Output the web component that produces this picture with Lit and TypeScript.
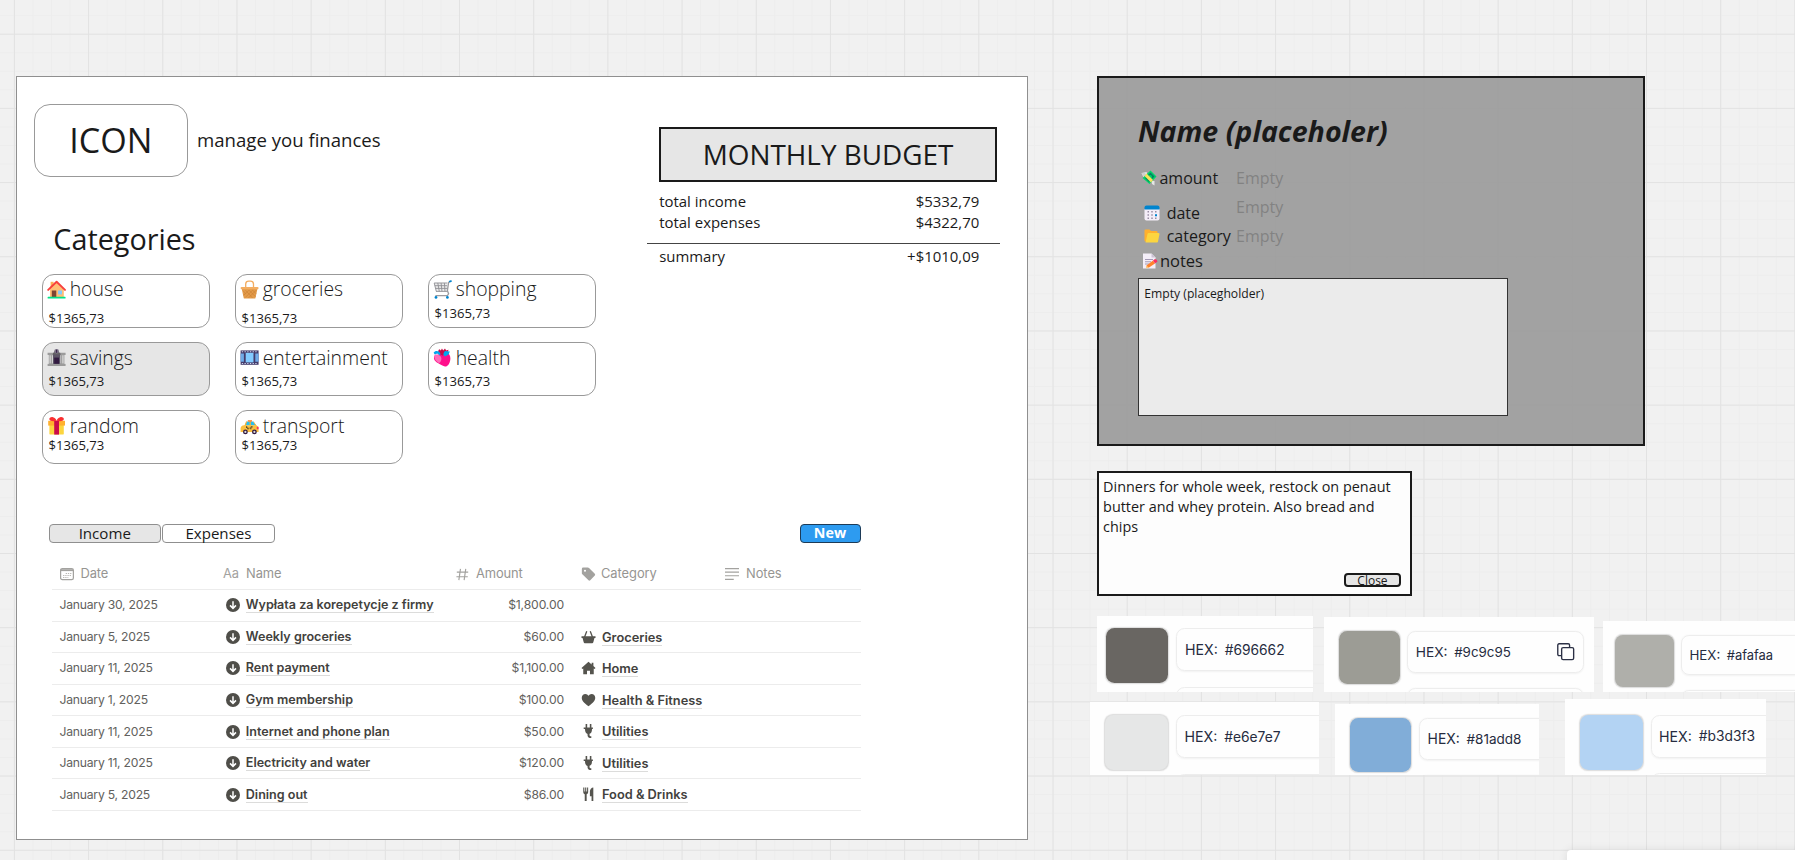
import { LitElement, html, css, svg, nothing } from "lit";
import { customElement } from "lit/decorators.js";
import { classMap } from "lit/directives/class-map.js";
import { styleMap } from "lit/directives/style-map.js";

const emoji: Record<string, unknown> = {
  house: svg`<path d="M5 13h22v16H5z" fill="#ffbf75"/><path d="M6 3h5v9H6z" fill="#ffb055"/><path d="M16 4 28 16v13H5V15z" fill="#ffbf75"/><path d="M2 16.5 16 3l14 13.500" fill="none" stroke="#f8403c" stroke-width="3.200" stroke-linecap="round" stroke-linejoin="round"/><path d="M8 17.500h7.500V29H8z" fill="#7d4533"/><path d="M18.500 17.500h6.500v6.500h-6.500z" fill="#83cbff"/><rect x="1" y="28" width="30" height="3" rx="1" fill="#00e38a"/>`,
  groceries: svg`<path d="M9.500 15V6.500A5 5 0 0 1 14.500 2h3a5 5 0 0 1 5 4.500V15" fill="none" stroke="#f3ad61" stroke-width="2.200"/><path d="M2.500 13h27L26 29a2 2 0 0 1-2 2H8a2 2 0 0 1-2-2z" fill="#e39b49"/><path d="M5 18l4 4-3 3M9 17l12 13M15 17l11 11M21 17l6 6M27 17 14 30M21 17 9 29M15 17l-9 9" fill="none" stroke="#c97f33" stroke-width="1"/><rect x="1" y="11.500" width="30" height="4" rx="2" fill="#f3ad61"/>`,
  shopping: svg`<path d="M2 5h21l2 13-19 1z" fill="#ececec"/><path d="M2 5h22M3 9.500h20.500M4 14h20M5 19h20M2 5l3.500 14M8 5l2.500 14M13.500 5l1.500 14M19 5l1 14" stroke="#8f8f94" stroke-width="1.500" fill="none"/><path d="M29 2 26 4l-2 14 2 5-2 3H4" fill="none" stroke="#9b9b9f" stroke-width="2.200"/><path d="M27 3l4-1.500" stroke="#0084ce" stroke-width="2.800"/><circle cx="5" cy="29" r="2.300" fill="#0084ce"/><circle cx="24" cy="29" r="2.300" fill="#0084ce"/>`,
  savings: svg`<path d="M1 8h30v3.500H1zM3 11h26v16H3z" fill="#9b9b9b"/><path d="M4 12h3v14H4zM25 12h3v14h-3z" fill="#c8c8c8"/><path d="M8.500 12H10v14H8.500zM22 12h1.500v14H22z" fill="#d8d8d8"/><path d="M10 8h12v20H10z" fill="#5c5567"/><path d="M12 16h8v12h-8z" fill="#321b41"/><path d="M9 11 16 2l7 9z" fill="#636363"/><circle cx="16" cy="5.500" r="4" fill="#7b7287"/><path d="M16 3v5" stroke="#321b41" stroke-width="1.600"/><path d="M1 26.500h30V30H1z" fill="#9b9b9b"/>`,
  entertainment: svg`<path d="M1 4h30v24H1z" fill="#433b6b"/><path d="M9.500 8h13v16h-13z" fill="#83cbff"/><path d="M1 9h5.500v14H1zM25.500 9H31v14h-5.500z" fill="#6fa9e6"/><path d="M3 6.200h26M3 25.800h26" stroke="#cfd5ee" stroke-width="1.800" stroke-dasharray="2.200 2.300"/>`,
  health: svg`<path d="M9 10C8 5 9 3 11 2l2 2 2-3 2 3 3-3 2 3 4-1-2 5 3 3-4 4z" fill="#ca0b4a"/><path d="M3 12c-3 6-1 9 5 13 5 3 9 5 12 6 6 0 9-8 9-14s-4-9-9-8l-5 1z" fill="#ff0f8b"/><path d="M3 11c5-1 10 1 11 6 0 5-2 7-4 8C4 22 1 17 3 11z" fill="#ff6eb9"/><path d="M1 8c2-3 5-4 9-2l3 4-2 2-4-3-4 2z" fill="#00a6ed"/><path d="m16 10 4-5 8 1-2 5-6 3z" fill="#00a6ed"/><path d="m12 11 3-7 3 1-1 8z" fill="#ca0b4a"/>`,
  random: svg`<path d="M4 14h24v15a2 2 0 0 1-2 2H6a2 2 0 0 1-2-2z" fill="#fcd53f"/><path d="M2 8h28v8H2z" fill="#ffb02e"/><path d="M12 8h8v23h-8z" fill="#ca0b4a"/><path d="M16 8C11 9 5 9 4 6s3-5 6-4 5 3 6 6zM16 8c5 1 11 1 12-2s-3-5-6-4-5 3-6 6z" fill="#f92f30"/>`,
  transport: svg`<path d="m8 16 3-7h11l5 7z" fill="#28bdf0"/><path d="M7 17 10 9h1.800L9.500 17zM16 9h2v8h-2zM22 9h1l5 8h-2z" fill="#ffb02e"/><path d="M13 7h7v2.500h-7z" fill="#ff822d"/><path d="M1 21q0-5 6-5.500h20q4 1 4 6v5H1z" fill="#fcc03f"/><path d="M10 17h2v2h2v2h2v-2h2v-2h3v2h-2v3h-2v-2h-2v2h-3v-2h-2z" fill="#5b4a2a"/><path d="M28 18h3v4h-3z" fill="#f92f60"/><circle cx="9" cy="26.500" r="4" fill="#321b41"/><circle cx="24" cy="26.500" r="4" fill="#321b41"/><circle cx="9" cy="26.500" r="1.800" fill="#ddd"/><circle cx="24" cy="26.500" r="1.800" fill="#ddd"/>`,
  amount: svg`<path d="M1 6 11 4l4 8-9 5zM21 22h6v9l-5-3z" fill="#e6e6e6"/><path d="M1 6 8 6l3 5-5 4z" fill="#cfcfcf"/><path d="M19 1 31 13 17 28 3 16z" fill="#00d26a"/><path d="m19 5 8 8-11 11-8-8z" fill="#008463"/><circle cx="18" cy="14" r="4" fill="#00d26a"/><path d="m11 7 13 13-4 5L7 12z" fill="#f9e15a"/>`,
  date: svg`<path d="M1 8h30v19a4 4 0 0 1-4 4H5a4 4 0 0 1-4-4z" fill="#f4eef8"/><path d="M1 9V5a4 4 0 0 1 4-4h22a4 4 0 0 1 4 4v4z" fill="#0084ce"/><path d="M7 12h3v3H7zm7.500 0h3v3h-3zm7.500 0h3v3h-3zM7 18.500h3v3H7zm7.500 0h3v3h-3zM7 25h3v3H7zm7.500 0h3v3h-3zm7.500 0h3v3h-3z" fill="#998ea4"/><path d="M22 18.500h4v4h-4z" fill="#0084ce"/>`,
  category: svg`<path d="M1 5a2 2 0 0 1 2-2h8l3 3h11a2 2 0 0 1 2 2v19H3a2 2 0 0 1-2-2z" fill="#ffb02e"/><path d="M9 10h20a2 2 0 0 1 2 2l-3 15a2 2 0 0 1-2 2H3l4-17a2 2 0 0 1 2-2z" fill="#fcd53f"/>`,
  notes: svg`<path d="M2 1h17l8 8v22H2z" fill="#f4eef8"/><path d="M19 1v8h8z" fill="#cdc4d6"/><path d="M6 13h16M6 17.500h12M6 22h8" stroke="#9b8fad" stroke-width="1.800"/><path d="m9 25 13-10 4 6-12 8-5 1z" fill="#ff822d"/><path d="m22 15 4-3q4 0 5 5l-5 4z" fill="#f92f60"/><path d="m9 25 4 4-4.500 2z" fill="#ffce7c"/>`,
};

const glyph: Record<string, unknown> = {
  arrow: svg`<circle cx="8" cy="8" r="8" fill="#4f4e49"/><path d="M8 3.600v8M4.600 8.400 8 11.800l3.400-3.400" fill="none" stroke="#fff" stroke-width="1.700"/>`,
  basket: svg`<path d="M0 7h16v2.200h-1.200L13.500 14q-.3 1-1.300 1H3.800q-1 0-1.300-1L1.200 9.200H0z" fill="#55544e"/><path d="M3.500 8 6 1.500M12.500 8 10 1.500" stroke="#55544e" stroke-width="1.500" fill="none"/>`,
  home: svg`<path d="M8 .8 11.600 4V2h2v3.800L16 8l-1 1.200-1-.7V15H9.700v-4H6.300v4H2V8.500l-1 .7L0 8z" fill="#55544e"/>`,
  heart: svg`<path d="M8 15C2.500 11 .3 8.300.3 5.300.3 2.800 2.200 1 4.400 1 6 1 7.300 1.900 8 3.200 8.700 1.900 10 1 11.600 1c2.200 0 4.100 1.800 4.100 4.300 0 3-2.200 5.700-7.700 9.700z" fill="#55544e"/>`,
  plug: svg`<path d="M4.700 0h1.800v4h3V0h1.800v4H13v1.800h-1c0 3-.8 4.800-2.800 5.400v1.300c0 1.200.8 1.600 2 1.500V16c-2.600 0-4.300-.8-4.300-3.200v-1.500C4.800 10.700 4 9 4 5.800H2.500V4h2.200z" fill="#55544e"/>`,
  fork: svg`<path d="M2 .5h1.300v4.700h.9V.5h1.300v4.700h.9V.5h1.200v5.300c0 1.500-.8 2.200-1.700 2.500V16H3.700V8.300C2.800 8 2 7.300 2 5.800zM13.500.5V16h-2v-5.500H9.600V5c0-2.500 1.800-4.500 3.900-4.500z" fill="#55544e"/>`,
  calendar: svg`<rect x=".7" y="1.700" width="14.600" height="12.800" rx="2" fill="none" stroke="#a3a29f" stroke-width="1.400"/><path d="M1 2.500h14v2.200H1z" fill="#a3a29f"/><path d="M6.500 7.500h6.500M3.500 9.800h9.500M3.500 12h6" stroke="#b8b7b4" stroke-width="1.200" stroke-dasharray="1.500 1"/>`,
  hash: svg`<path d="M5.500 1 3.500 15M12 1l-2 14M1 5h14M.500 10.800h14" stroke="#a3a29f" stroke-width="1.400" fill="none"/>`,
  tag: svg`<path d="M.4 2.200Q.4.600 2 .600h5.200q.8 0 1.400.6l6.600 6.600q.9 1 0 2L10 15.200q-1 .8-2 0L1 8.400q-.6-.6-.6-1.400z" fill="#a3a29f"/><circle cx="4" cy="4.200" r="1.200" fill="#fff"/>`,
  lines: svg`<path d="M0 1.800h16M0 5.900h16M0 10h16M0 14.100h10" stroke="#a3a29f" stroke-width="1.400"/>`,
};

const categories = [
  ["house", "low"], ["groceries", "low"], ["shopping", "mid"],
  ["savings", "mid shift"], ["entertainment", "mid shift"], ["health", "mid shift"],
  ["random", "high shift"], ["transport", "high shift"],
];

const entries = [
  ["January 30, 2025", "Wypłata za korepetycje z firmy", "$1,800.00", "", ""],
  ["January 5, 2025", "Weekly groceries", "$60.00", "basket", "Groceries"],
  ["January 11, 2025", "Rent payment", "$1,100.00", "home", "Home"],
  ["January 1, 2025", "Gym membership", "$100.00", "heart", "Health & Fitness"],
  ["January 11, 2025", "Internet and phone plan", "$50.00", "plug", "Utilities"],
  ["January 11, 2025", "Electricity and water", "$120.00", "plug", "Utilities"],
  ["January 5, 2025", "Dining out", "$86.00", "fork", "Food & Drinks"],
];

const swatches = [
  { hex: "#696662", x: 1097, y: 616, w: 216, h: 76, dx: 8.9, dy: 12.2, s: 1 },
  { hex: "#9c9c95", x: 1324, y: 616.8, w: 269.8, h: 75.2, dx: 15.2, dy: 14.2, s: 0.968, copy: true },
  { hex: "#afafaa", x: 1603, y: 620.7, w: 192, h: 71.3, dx: 12.4, dy: 14.3, s: 0.937 },
  { hex: "#e6e7e7", x: 1090.3, y: 702, w: 228.7, h: 73, dx: 15.2, dy: 13.3, s: 1 },
  { hex: "#81add8", x: 1335, y: 703.8, w: 203.7, h: 71.2, dx: 15.2, dy: 14, s: 0.98 },
  { hex: "#b3d3f3", x: 1565, y: 699, w: 201, h: 76, dx: 15, dy: 15.5, s: 1 },
];

@customElement("color-card")
export class ColorCard extends LitElement {
  static properties = { hex: {}, copy: { type: Boolean } };
  declare hex: string;
  declare copy: boolean;
  static styles = css`
    :host { display: flex; align-items: flex-start; gap: .8em; box-sizing: border-box; overflow: hidden; background: #fefefe; font-family: Inter, sans-serif; }
    .chip { flex: none; width: 6.25em; height: 5.5em; border-radius: .85em; box-shadow: 0 0 .12em .03em rgba(0, 0, 0, .14); }
    .fields { flex: none; width: 18.2em; }
    .field { box-sizing: border-box; height: 4.3em; margin-bottom: 1.55em; padding: 0 .8em 0 .75em; border: 1px solid #ededed; border-radius: .85em; display: flex; align-items: center; color: #262c40; box-shadow: 0 .1em .2em rgba(0, 0, 0, .05); }
    .key { font-size: 1.42em; width: 2.800em; }
    .val { font-size: 1.38em; }
    svg { width: 1.8em; height: 1.8em; margin-left: auto; }
  `;
  render() {
    return html`<div class="chip" style=${styleMap({ background: this.hex })}></div>
      <div class="fields">
        <div class="field"><span class="key">HEX:</span><span class="val">${this.hex}</span>
          ${this.copy ? html`<svg viewBox="0 0 18 18" fill="none" stroke="#2b3045" stroke-width="1.400"><rect x="4.800" y="4.800" width="12.400" height="12.400" rx="1.500"/><path d="M4.800 13H2.200Q.8 13 .8 11.600V2.200Q.8.8 2.200.8h9.400Q13 .8 13 2.200v2.600"/></svg>` : nothing}
        </div>
        <div class="field"></div>
      </div>`;
  }
}

@customElement("app-root")
export class AppRoot extends LitElement {
  static styles = css`
    :host { display: block; font-family: "Open Sans", sans-serif; color: #1a1a1a; }
    * { box-sizing: border-box; }
    .canvas {
      position: relative; width: 1795px; height: 860px; overflow: hidden; background-color: #f1f1f1;
      background-image:
        linear-gradient(90deg, #e2e2e2 1.1px, transparent 1.1px),
        linear-gradient(#e2e2e2 1.1px, transparent 1.1px),
        linear-gradient(90deg, #ededed 1px, transparent 1px),
        linear-gradient(#ededed 1px, transparent 1px);
      background-size: 74.2px 74.2px, 74.2px 74.2px, 18.550px 18.550px, 18.550px 18.550px;
      background-position: 13.900px 33.700px;
    }
    .item { position: absolute; }
    .sheet { left: 16px; top: 76px; width: 1011.500px; height: 764px; background: #fff; border: 1px solid #8f8f8f; }
    .top { display: flex; justify-content: space-between; height: 447px; padding: 27px 26.500px 0 17px; }
    .brand { display: flex; align-items: center; }
    .logo { width: 153.500px; height: 73px; padding-bottom: 2px; border: 1px solid #999; border-radius: 16px; display: grid; place-items: center; font-size: 34.100px; line-height: 40px; }
    .tagline { margin-left: 9.500px; padding-bottom: 2px; font-size: 18.600px; line-height: 24px; }
    h2 { margin: 42px 0 15.200px 19.300px; font-size: 28.750px; line-height: 40px; font-weight: 400; }
    .cards { display: grid; grid-template-columns: repeat(3, 168px); grid-auto-rows: 54px; gap: 13.700px 25px; margin-left: 7.700px; }
    .card { border: 1px solid #999; border-radius: 12px; padding: 2px 4.800px 0; background: #fff; }
    .card.on { background: #e6e6e6; }
    .title { display: flex; align-items: center; gap: 3px; font-size: 19.400px; line-height: 24px; font-weight: 300; white-space: nowrap; }
    .title svg { width: 19.200px; height: 19.200px; }
    .price { padding-left: 1px; font-size: 13.100px; line-height: 16px; }
    .shift .title { margin: 1px 0 -1px; }
    .low .price { margin-top: 8.800px; }
    .mid .price { margin-top: 3.700px; }
    .high .price { margin-top: .2px; }
    .budget { width: 353.500px; padding-top: 23px; font-size: 14.950px; line-height: 21.300px; }
    .banner { width: 338.500px; height: 55px; margin: 0 0 8.800px 12.300px; padding-bottom: 2px; border: 2px solid #1a1a1a; background: #e6e6e6; display: grid; place-items: center; font-size: 27.900px; line-height: 38px; }
    .line { display: flex; justify-content: space-between; padding: 0 20.700px 0 12.700px; }
    .rule { height: 1px; margin: 9.800px 0 1.800px; background: #444; }
    .tabs { display: flex; gap: 1.200px; padding: 0 166px 0 31.500px; height: 19px; font-size: 15.100px; line-height: 16.500px; text-align: center; }
    .tab { width: 112.500px; border: 1px solid #8f8f8f; border-radius: 4px; }
    .tab.on { background: #e6e6e6; }
    .new { width: 61px; margin-left: auto; border: 1px solid #1d3b57; border-radius: 4px; background: #2d9bf0; color: #fff; font-size: 14.300px; font-weight: 700; }
    .table { width: 808.500px; margin: 16px 0 0 35px; font-family: Inter, "Open Sans", sans-serif; font-size: 12.200px; line-height: 18px; color: #62615d; }
    .row { display: grid; grid-template-columns: 171px 233px 125px 144px 1fr; align-items: center; height: 31.570px; border-bottom: 1px solid #ececec; }
    .head { height: 31px; font-size: 12.900px; color: #969592; letter-spacing: -.05px; }
    .cell { display: flex; align-items: center; }
    .cell svg { width: 14px; height: 14px; flex: none; }
    .date { padding-left: 7.500px; letter-spacing: -.24px; }
    .head .date { gap: 7px; letter-spacing: -.1px; }
    .name { padding-left: 2.800px; gap: 6px; }
    .head .name { padding-left: 0; gap: 6px; }
    .aa { width: 17px; color: #a3a29f; }
    .amt { justify-content: flex-end; padding-right: 17px; letter-spacing: -.15px; }
    .head .amt { justify-content: flex-start; gap: 7px; }
    .head .amt svg { width: 13px; height: 13px; }
    .cat { gap: 6px; padding-top: 1.500px; }
    .cat svg { width: 15px; margin-top: -2px; }
    .cat .link { font-size: 12.800px; }
    .head .cat { gap: 5px; padding: 0; }
    .head .cat svg { margin: 0; }
    .note { gap: 7px; }
    .link { font-size: 12.550px; font-weight: 600; line-height: 15px; color: #42413d; border-bottom: 1px solid #dcdcdb; white-space: nowrap; }
    .form { left: 1096.700px; top: 76px; width: 548.500px; height: 370px; padding: 33px 39.700px 0 39.200px; border: 2px solid #1a1a1a; background: rgba(153, 153, 153, .9); }
    .form h1 { margin: 0 0 16.700px; font: italic 700 28.600px/40px "Open Sans", sans-serif; white-space: nowrap; }
    .fields { display: flex; font-size: 16px; line-height: 20px; }
    .labels { width: 98.200px; }
    .label { display: flex; align-items: center; white-space: nowrap; gap: 2px; padding-left: 3.600px; }
    .label svg { width: 16px; height: 16px; flex: none; }
    .label.date-l { margin-top: 15.400px; }
    .label.date-l, .label.category-l { padding-left: 5.800px; gap: 7px; }
    .label.category-l { margin-top: 3.400px; }
    .label.notes-l { margin-top: 4.500px; font-size: 16.500px; gap: 1.500px; padding-left: 4.500px; }
    .values { display: flex; flex-direction: column; gap: 9.200px; color: #828282; }
    .area { width: 370.600px; height: 138.200px; margin-top: 7.200px; padding: 6.800px 5.400px; border: 1px solid #333; background: #ebebeb; font-size: 12.160px; line-height: 16px; }
    .memo { left: 1096.700px; top: 470.800px; width: 315.300px; height: 125.300px; display: flex; flex-direction: column; justify-content: space-between; padding: 4.200px 9px 7px 4.400px; border: 2px solid #1a1a1a; background: #fdfdfd; font-size: 14.400px; line-height: 19.800px; }
    .close { align-self: flex-end; width: 57px; height: 14.500px; border: 2px solid #1a1a1a; border-radius: 4px; background: #e6e6e6; font-size: 12px; line-height: 11px; text-align: center; }
    .bar { left: 1567px; top: 850px; width: 240px; height: 40px; border-radius: 4px; background: #fff; box-shadow: 0 0 10px rgba(0, 0, 0, .09); }
  `;

  icon(set: Record<string, unknown>, name: string, box: number) {
    return html`<svg viewBox="0 0 ${box} ${box}">${set[name]}</svg>`;
  }

  render() {
    return html`<div class="canvas">
      <section class="item sheet">
        <div class="top">
          <div>
            <div class="brand"><div class="logo">ICON</div><div class="tagline">manage you finances</div></div>
            <h2>Categories</h2>
            <div class="cards">
              ${categories.map(([name, pos]) => html`<div class="card ${pos} ${name === "savings" ? "on" : ""}">
                <div class="title">${this.icon(emoji, name, 32)}<span>${name}</span></div>
                <div class="price">$1365,73</div>
              </div>`)}
            </div>
          </div>
          <div class="budget">
            <div class="banner">MONTHLY BUDGET</div>
            <div class="line"><span>total income</span><span>$5332,79</span></div>
            <div class="line"><span>total expenses</span><span>$4322,70</span></div>
            <div class="rule"></div>
            <div class="line"><span>summary</span><span>+$1010,09</span></div>
          </div>
        </div>
        <div class="tabs"><div class=${classMap({ tab: true, on: true })}>Income</div><div class="tab">Expenses</div><div class="new">New</div></div>
        <div class="table">
          <div class="row head">
            <div class="cell date">${this.icon(glyph, "calendar", 16)}<span>Date</span></div>
            <div class="cell name"><span class="aa">Aa</span><span>Name</span></div>
            <div class="cell amt">${this.icon(glyph, "hash", 16)}<span>Amount</span></div>
            <div class="cell cat">${this.icon(glyph, "tag", 16)}<span>Category</span></div>
            <div class="cell note">${this.icon(glyph, "lines", 16)}<span>Notes</span></div>
          </div>
          ${entries.map(([date, name, amount, icon, cat]) => html`<div class="row">
            <div class="cell date">${date}</div>
            <div class="cell name">${this.icon(glyph, "arrow", 16)}<span class="link">${name}</span></div>
            <div class="cell amt">${amount}</div>
            <div class="cell cat">${cat ? html`${this.icon(glyph, icon, 16)}<span class="link">${cat}</span>` : nothing}</div>
          </div>`)}
        </div>
      </section>

      <section class="item form">
        <h1>Name (placeholer)</h1>
        <div class="fields">
          <div class="labels">${["amount", "date", "category", "notes"].map((l) => html`<div class="label ${l}-l">${this.icon(emoji, l, 32)}<span>${l}</span></div>`)}</div>
          <div class="values"><span>Empty</span><span>Empty</span><span>Empty</span></div>
        </div>
        <div class="area">Empty (placegholder)</div>
      </section>

      <section class="item memo">
        <div>Dinners for whole week, restock on penaut<br>butter and whey protein. Also bread and<br>chips</div>
        <div class="close">Close</div>
      </section>

      ${swatches.map((c) => html`<color-card class="item" .hex=${c.hex} .copy=${!!c.copy} style=${styleMap({
        left: `${c.x}px`, top: `${c.y}px`, width: `${c.w}px`, height: `${c.h}px`,
        padding: `${c.dy}px 0 0 ${c.dx}px`, fontSize: `${c.s * 10}px`,
      })}></color-card>`)}
      <div class="item bar"></div>
    </div>`;
  }
}
